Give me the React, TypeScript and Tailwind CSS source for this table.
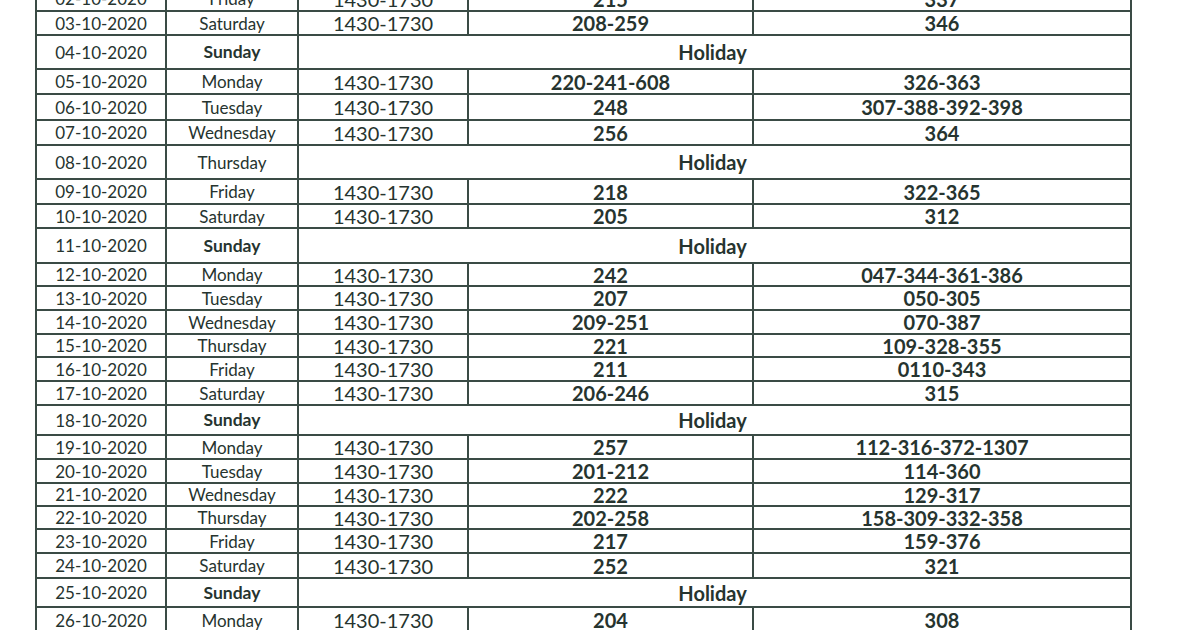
import React from 'react';

type Row = {
  date: string;
  day: string;
  h: string;
  holiday?: boolean;
  boldDay?: boolean;
  a?: string;
  b?: string;
};

const rows: Row[] = [
  { date: '02-10-2020', day: 'Friday', h: 'h-[25px]', a: '215', b: '337' },
  { date: '03-10-2020', day: 'Saturday', h: 'h-[24px]', a: '208-259', b: '346' },
  { date: '04-10-2020', day: 'Sunday', h: 'h-[34px]', holiday: true, boldDay: true },
  { date: '05-10-2020', day: 'Monday', h: 'h-[25px]', a: '220-241-608', b: '326-363' },
  { date: '06-10-2020', day: 'Tuesday', h: 'h-[26px]', a: '248', b: '307-388-392-398' },
  { date: '07-10-2020', day: 'Wednesday', h: 'h-[25px]', a: '256', b: '364' },
  { date: '08-10-2020', day: 'Thursday', h: 'h-[34px]', holiday: true },
  { date: '09-10-2020', day: 'Friday', h: 'h-[25px]', a: '218', b: '322-365' },
  { date: '10-10-2020', day: 'Saturday', h: 'h-[24px]', a: '205', b: '312' },
  { date: '11-10-2020', day: 'Sunday', h: 'h-[35px]', holiday: true, boldDay: true },
  { date: '12-10-2020', day: 'Monday', h: 'h-[23px]', a: '242', b: '047-344-361-386' },
  { date: '13-10-2020', day: 'Tuesday', h: 'h-[24px]', a: '207', b: '050-305' },
  { date: '14-10-2020', day: 'Wednesday', h: 'h-[24px]', a: '209-251', b: '070-387' },
  { date: '15-10-2020', day: 'Thursday', h: 'h-[23px]', a: '221', b: '109-328-355' },
  { date: '16-10-2020', day: 'Friday', h: 'h-[24px]', a: '211', b: '0110-343' },
  { date: '17-10-2020', day: 'Saturday', h: 'h-[24px]', a: '206-246', b: '315' },
  { date: '18-10-2020', day: 'Sunday', h: 'h-[30px]', holiday: true, boldDay: true },
  { date: '19-10-2020', day: 'Monday', h: 'h-[24px]', a: '257', b: '112-316-372-1307' },
  { date: '20-10-2020', day: 'Tuesday', h: 'h-[24px]', a: '201-212', b: '114-360' },
  { date: '21-10-2020', day: 'Wednesday', h: 'h-[23px]', a: '222', b: '129-317' },
  { date: '22-10-2020', day: 'Thursday', h: 'h-[23px]', a: '202-258', b: '158-309-332-358' },
  { date: '23-10-2020', day: 'Friday', h: 'h-[24px]', a: '217', b: '159-376' },
  { date: '24-10-2020', day: 'Saturday', h: 'h-[25px]', a: '252', b: '321' },
  { date: '25-10-2020', day: 'Sunday', h: 'h-[29px]', holiday: true, boldDay: true },
  { date: '26-10-2020', day: 'Monday', h: 'h-[26px]', a: '204', b: '308' },
];

const cell = 'border-2 border-[#3a4b45] p-0 text-center leading-none';

const App = () => {
  return (
    <div className="w-[1200px] h-[630px] overflow-hidden bg-white" style={{ fontFamily: 'Lato, "Open Sans", sans-serif' }}>
      <table className="ml-[35px] mt-[-15px] w-[1095px] border-collapse table-fixed text-[#26342f]">
        <colgroup>
          <col className="w-[130px]" />
          <col className="w-[132px]" />
          <col className="w-[170px]" />
          <col className="w-[285px]" />
          <col className="w-[378px]" />
        </colgroup>
        <tbody>
          {rows.map((r) => (
            <tr key={r.date} className={r.h}>
              <td className={`${cell} text-[17px]`}>{r.date}</td>
              <td className={`${cell} ${r.boldDay ? 'font-bold text-[17.5px]' : 'text-[17px]'}`}>{r.day}</td>
              {r.holiday ? (
                <td colSpan={3} className={`${cell} text-[20px] font-bold`}>
                  <span className="relative left-[-2px]">Holiday</span>
                </td>
              ) : (
                <>
                  <td className={`${cell} text-[20px]`}>1430-1730</td>
                  <td className={`${cell} text-[20px] font-bold`}>{r.a}</td>
                  <td className={`${cell} text-[20px] font-bold`}>{r.b}</td>
                </>
              )}
            </tr>
          ))}
        </tbody>
      </table>
    </div>
  );
};

export default App;
